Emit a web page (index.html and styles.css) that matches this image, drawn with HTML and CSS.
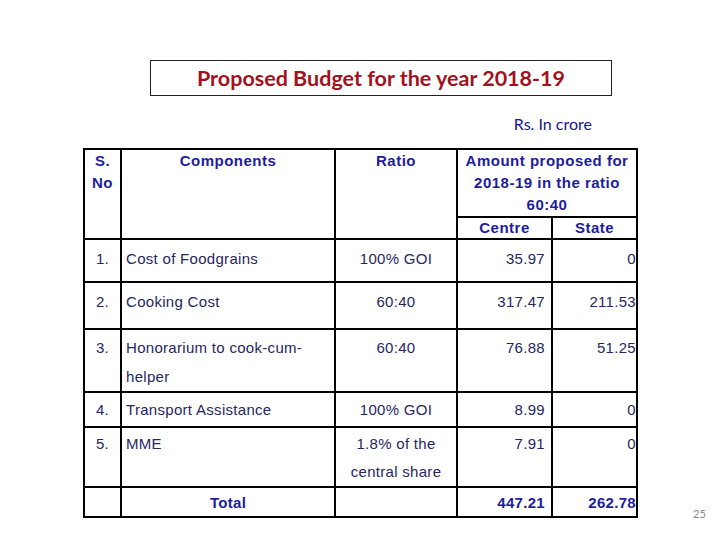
FILE: index.html
```html
<!DOCTYPE html>
<html>
<head>
<meta charset="utf-8">
<link rel="stylesheet" href="styles.css">
</head>
<body>
<div class="page">
  <div class="title-box">Proposed Budget for the year 2018-19</div>
  <div class="unit">Rs. In crore</div>
  <table class="budget">
    <colgroup>
      <col class="c-sno"><col class="c-comp"><col class="c-ratio"><col class="c-centre"><col class="c-state">
    </colgroup>
    <tr class="h1">
      <th rowspan="2">S.<br>No</th>
      <th rowspan="2">Components</th>
      <th rowspan="2">Ratio</th>
      <th colspan="2">Amount proposed for<br>2018-19 in the ratio<br>60:40</th>
    </tr>
    <tr class="h2">
      <th>Centre</th>
      <th>State</th>
    </tr>
    <tr class="r1">
      <td class="sno">1.</td><td class="comp">Cost of Foodgrains</td><td class="ratio">100% GOI</td><td class="num">35.97</td><td class="num st">0</td>
    </tr>
    <tr class="r2">
      <td class="sno">2.</td><td class="comp">Cooking Cost</td><td class="ratio">60:40</td><td class="num">317.47</td><td class="num st">211.53</td>
    </tr>
    <tr class="r3">
      <td class="sno">3.</td><td class="comp">Honorarium to cook-cum-<br>helper</td><td class="ratio">60:40</td><td class="num">76.88</td><td class="num st">51.25</td>
    </tr>
    <tr class="r4">
      <td class="sno">4.</td><td class="comp">Transport Assistance</td><td class="ratio">100% GOI</td><td class="num">8.99</td><td class="num st">0</td>
    </tr>
    <tr class="r5">
      <td class="sno">5.</td><td class="comp">MME</td><td class="ratio">1.8% of the<br>central share</td><td class="num">7.91</td><td class="num st">0</td>
    </tr>
    <tr class="rt">
      <td></td><td class="total-label">Total</td><td></td><td class="num total">447.21</td><td class="num st total">262.78</td>
    </tr>
  </table>
  <div class="pageno">25</div>
</div>
</body>
</html>
```
FILE: styles.css
```css
html, body {
  margin: 0;
  padding: 0;
  background: #ffffff;
}
.page {
  position: relative;
  width: 720px;
  height: 540px;
  padding-top: 60px;
  box-sizing: border-box;
  overflow: hidden;
}
.title-box {
  margin-left: 150px;
  width: 462px;
  height: 36px;
  border: 1px solid #222;
  box-sizing: border-box;
  text-align: center;
  font-family: "Lato", "Open Sans", sans-serif;
  font-weight: bold;
  font-size: 21.5px;
  line-height: 34px;
  color: #a3111c;
}
.unit {
  margin-top: 18px;
  width: 592px;
  text-align: right;
  font-family: "Lato", "Open Sans", sans-serif;
  font-size: 16px;
  line-height: 20px;
  color: #16168c;
}
.budget {
  margin-top: 14px;
  margin-left: 83px;
  border-collapse: collapse;
  table-layout: fixed;
  width: 553px;
  font-family: "Liberation Sans", Arial, sans-serif;
  font-size: 15px;
}
.c-sno { width: 37px; }
.c-comp { width: 214px; }
.c-ratio { width: 122px; }
.c-centre { width: 95px; }
.c-state { width: 85px; }
.budget th, .budget td {
  border: 2px solid #000;
  vertical-align: top;
  padding: 0;
}
.budget th {
  color: #1d1d9e;
  font-weight: bold;
  line-height: 22px;
  letter-spacing: 0.5px;
  text-align: center;
}
.h1 { height: 66px; }
.h2 { height: 22px; }
.h2 th { line-height: 20px; }
.budget td {
  color: #27275f;
  line-height: 30px;
  letter-spacing: 0.3px;
  padding-top: 4px;
}
.r1 { height: 43px; }
.r2 { height: 47px; }
.r3 { height: 63px; }
.r3 td { line-height: 29px; padding-top: 3px; }
.r4 { height: 35px; }
.r4 td { line-height: 27px; padding-top: 3px; }
.r5 { height: 60px; }
.r5 td { line-height: 28px; padding-top: 2px; }
.rt { height: 30px; }
.rt td { line-height: 26px; padding-top: 2px; }
.sno { text-align: center; }
.comp { padding-left: 4px !important; }
.ratio { text-align: center; }
.num { text-align: right; padding-right: 6px !important; }
.num.st { padding-right: 0 !important; }
.total, .total-label {
  font-weight: bold;
  color: #1d1d9e !important;
}
.total-label { text-align: center; }
.pageno {
  position: absolute;
  left: 693px;
  top: 507px;
  font-family: "Lato", sans-serif;
  font-size: 11px;
  color: #8a8a8a;
}
```
